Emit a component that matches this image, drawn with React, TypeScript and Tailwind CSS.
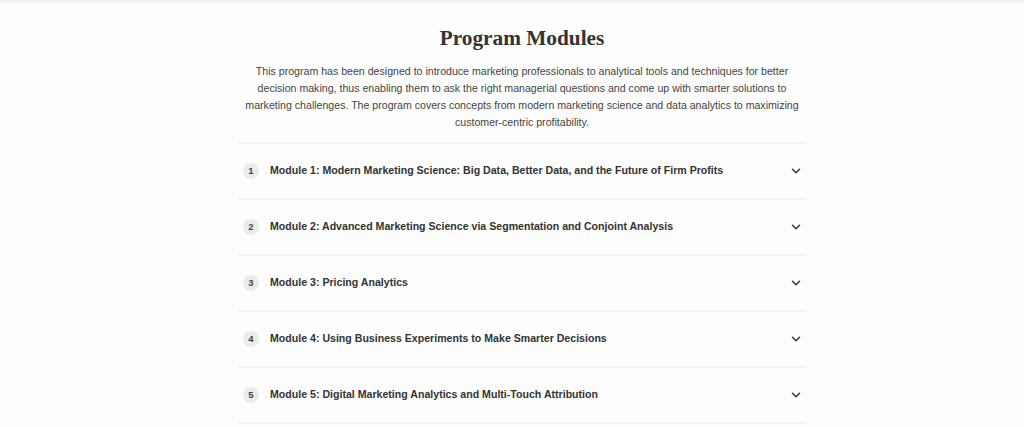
import { ChevronDown } from 'lucide-react';

const modules = [
  'Module 1: Modern Marketing Science: Big Data, Better Data, and the Future of Firm Profits',
  'Module 2: Advanced Marketing Science via Segmentation and Conjoint Analysis',
  'Module 3: Pricing Analytics',
  'Module 4: Using Business Experiments to Make Smarter Decisions',
  'Module 5: Digital Marketing Analytics and Multi-Touch Attribution',
];

export default function App() {
  return (
    <div className="min-h-[427px] bg-[#fdfdfd] font-['Liberation_Sans',Arial,sans-serif] text-[#333]">
      <div className="h-[3px] bg-[#f3f3f3]" />
      <div className="pl-[20px]">
        <section className="mx-auto w-[568px] pt-[21px]">
          <h2 className="text-center font-['Liberation_Serif','Times_New_Roman',serif] text-[21.3px] font-bold leading-[28px] text-[#333]">
            Program Modules
          </h2>
          <p className="mt-[11px] text-center text-[10.6px] leading-[17px] text-[#444]">
            This program has been designed to introduce marketing professionals to analytical tools and techniques for better
            decision making, thus enabling them to ask the right managerial questions and come up with smarter solutions to
            marketing challenges. The program covers concepts from modern marketing science and data analytics to maximizing
            customer-centric profitability.
          </p>
          <div className="mt-[11px] border-t-2 border-[#f2f2f2]">
            {modules.map((name, i) => (
              <div key={name} className="flex h-[56px] items-center border-b-2 border-[#f2f2f2] pl-[5px] pr-[3px]">
                <span className="flex h-4 w-4 shrink-0 items-center justify-center rounded-full bg-[#eaebed] text-[9.5px] font-bold text-[#444]">
                  {i + 1}
                </span>
                <span className="ml-[11px] flex-1 text-[10.6px] font-bold text-[#333]">{name}</span>
                <ChevronDown className="h-[14px] w-[14px] text-[#333]" strokeWidth={2.6} />
              </div>
            ))}
          </div>
        </section>
      </div>
    </div>
  );
}
